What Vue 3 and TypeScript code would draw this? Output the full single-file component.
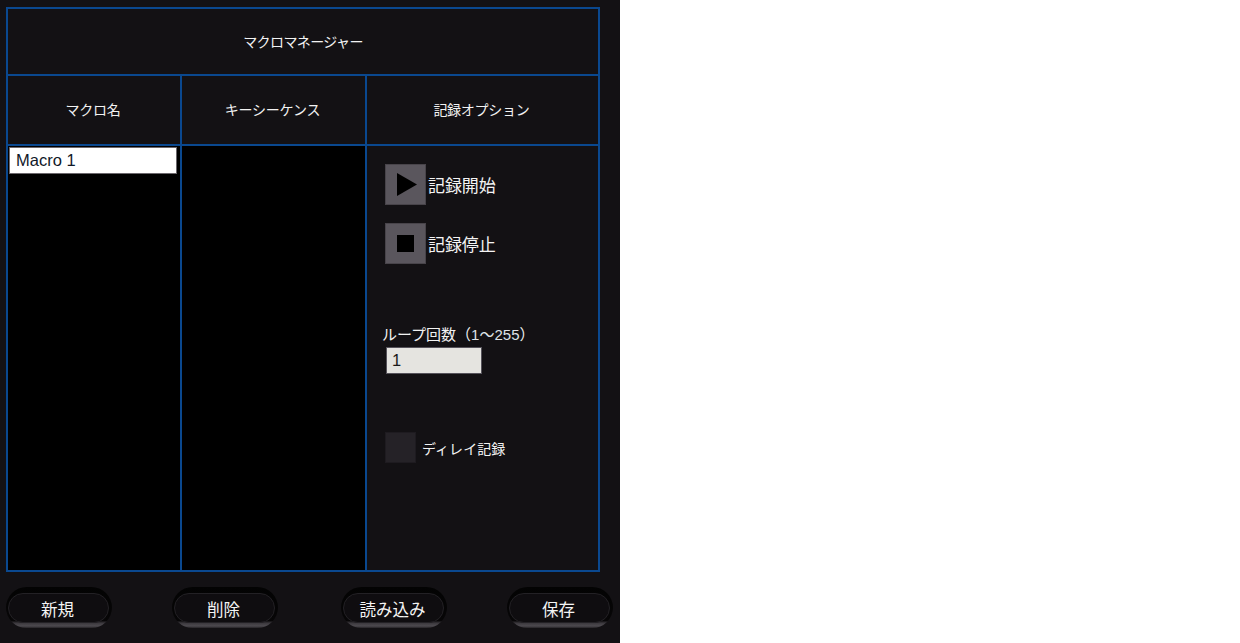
<script setup lang="ts">
const buttons: { label: string; cls: string }[] = [
  { label: '新規', cls: 'b1' },
  { label: '削除', cls: 'b2' },
  { label: '読み込み', cls: 'b3' },
  { label: '保存', cls: 'b4' },
]
</script>

<template>
  <div class="page">
    <div class="panel">
      <div class="table">
        <div class="title">マクロマネージャー</div>
        <div class="head">
          <div class="hcell c1">マクロ名</div>
          <div class="hcell c2">キーシーケンス</div>
          <div class="hcell c3">記録オプション</div>
        </div>
        <div class="body">
          <div class="col c1 black">
            <div class="macro">Macro 1</div>
          </div>
          <div class="col c2 black"></div>
          <div class="col c3 options">
            <div class="rec first">
              <div class="rec-btn">
                <svg class="play" width="20" height="23" viewBox="0 0 20 23"><path d="M0 0 L20 11.5 L0 23 Z" fill="#000" /></svg>
              </div>
              <span class="rec-label">記録開始</span>
            </div>
            <div class="rec second">
              <div class="rec-btn">
                <div class="stop"></div>
              </div>
              <span class="rec-label">記録停止</span>
            </div>
            <div class="loop-label">ループ回数（<span class="num">1〜255</span>）</div>
            <div class="loop-input">1</div>
            <div class="delay">
              <div class="check"></div>
              <span class="delay-label">ディレイ記録</span>
            </div>
          </div>
        </div>
      </div>
      <div class="actions">
        <div v-for="b in buttons" :key="b.label" class="pill" :class="b.cls">
          <div class="pill-inner"><span>{{ b.label }}</span></div>
        </div>
      </div>
    </div>
  </div>
</template>

<style>
html, body { margin: 0; background: #fff; }
</style>

<style scoped>
.page {
  width: 1240px;
  height: 643px;
  background: #fff;
  overflow: hidden;
  font-family: "Noto Sans CJK JP", "Liberation Sans", sans-serif;
}
.panel {
  width: 620px;
  height: 643px;
  box-sizing: border-box;
  padding: 7px 0 0 6px;
  background: #131114;
  color: #f2f2f2;
  font-size: 14px;
}
.table {
  width: 594px;
  height: 565px;
  box-sizing: border-box;
  border: 2px solid #0a488f;
  display: flex;
  flex-direction: column;
}
.title {
  height: 67px;
  flex: none;
  box-sizing: border-box;
  display: flex;
  align-items: center;
  justify-content: center;
  border-bottom: 2px solid #0a488f;
  letter-spacing: -0.6px;
  padding-bottom: 1px;
}
.head {
  height: 70px;
  flex: none;
  box-sizing: border-box;
  display: flex;
  border-bottom: 2px solid #0a488f;
}
.hcell {
  display: flex;
  align-items: center;
  justify-content: center;
  box-sizing: border-box;
  letter-spacing: -0.25px;
  padding: 0 2px 2px 0;
}
.c1 { width: 174px; flex: none; border-right: 2px solid #0a488f; box-sizing: border-box; }
.c2 { width: 185px; flex: none; border-right: 2px solid #0a488f; box-sizing: border-box; }
.c3 { flex: 1; }
.body {
  flex: 1;
  display: flex;
  min-height: 0;
}
.col { box-sizing: border-box; }
.black { background: #000; }
.macro {
  margin: 1px 3px 0 1px;
  height: 27px;
  box-sizing: border-box;
  background: #fff;
  border: 1px solid #6b676c;
  color: #101828;
  font-family: "Liberation Sans", sans-serif;
  font-size: 16.5px;
  line-height: 25px;
  padding-left: 6px;
}
.options {
  position: relative;
  display: flex;
  flex-direction: column;
  padding-left: 15px;
}
.rec {
  display: flex;
  align-items: center;
  gap: 2px;
}
.first { margin: 18px 0 0 3px; }
.second { margin: 18px 0 0 3px; }
.rec-btn {
  width: 41px;
  height: 41px;
  flex: none;
  box-sizing: border-box;
  background: #5a565d;
  border: 1px solid #48444a;
  display: flex;
  align-items: center;
  justify-content: center;
}
.play { margin-left: 3px; }
.rec-label { font-size: 17px; color: #f4f4f4; letter-spacing: -0.1px; }
.stop { width: 17px; height: 17px; background: #000; }
.loop-label {
  margin-top: 60px;
  font-size: 15px;
  line-height: 20px;
  white-space: nowrap;
}
.num { font-family: "Liberation Sans", "Noto Sans CJK JP", sans-serif; font-size: 15px; color: #dfe3e8; }
.loop-input {
  margin: 2px 0 0 4px;
  width: 96px;
  height: 27px;
  box-sizing: border-box;
  background: #e5e4e0;
  border: 1px solid #55525a;
  color: #1a1a1a;
  font-family: "Liberation Sans", sans-serif;
  font-size: 16.5px;
  line-height: 24px;
  padding-left: 5px;
}
.delay {
  margin: 58px 0 0 3px;
  display: flex;
  align-items: center;
  gap: 6px;
}
.check {
  width: 31px;
  height: 31px;
  box-sizing: border-box;
  background: #252227;
  border: 1px solid #1e1b20;
}
.delay-label { font-size: 14px; letter-spacing: 0.05px; }
.actions {
  display: flex;
  margin-top: 15px;
}
.pill {
  width: 106px;
  height: 41px;
  flex: none;
  box-sizing: border-box;
  border-radius: 21px;
  padding: 6px 3px 5px 2px;
  background: linear-gradient(#030303 0, #070607 82%, #3c393e 88%, #4d4a4f 95%, #262427 100%);
  display: flex;
}
.pill-inner {
  flex: 1;
  box-sizing: border-box;
  border-radius: 15px;
  background: #0f0d10;
  border: 1px solid #232125;
  display: flex;
  align-items: center;
  justify-content: center;
  color: #f4f4f4;
  font-size: 16.5px;
  padding: 1px 2px 0 0;
}
.b2 { margin-left: 60px; }
.b3 { margin-left: 63px; }
.b4 { margin-left: 60px; }
</style>
